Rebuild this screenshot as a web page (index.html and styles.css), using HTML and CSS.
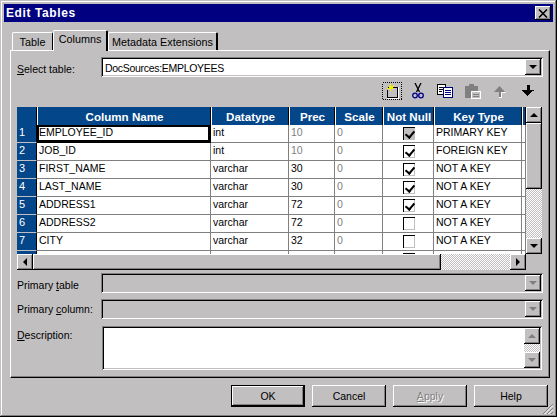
FILE: index.html
```html
<!DOCTYPE html>
<html lang="en">

<head>
    <meta charset="UTF-8">
    <title>Edit Tables</title>
    <link rel="stylesheet" href="styles.css">
</head>

<body>
    <div class="window">
        <header class="titlebar">
            <span class="title">Edit Tables</span>
            <button class="close raised">
                <svg width="10" height="9" viewBox="0 0 10 9"><path d="M1 0.5L9 8.5M9 0.5L1 8.5" stroke="#000" stroke-width="1.6" /></svg>
            </button>
        </header>

        <nav class="tabs">
            <div class="tab tab-table">Table</div>
            <div class="tab tab-active">Columns</div>
            <div class="tab tab-last">Metadata Extensions</div>
        </nav>

        <main class="pane">
            <div class="field">
                <label class="field-label label-low"><u>S</u>elect table:</label>
                <div class="combo sunken">
                    <span class="combo-text">DocSources:EMPLOYEES</span>
                    <span class="sb-btn raised"><i class="arrow arrow-down"></i></span>
                </div>
            </div>

            <div class="toolbar">
                <span class="tool tool-new">
                    <svg width="20" height="18" viewBox="0 0 20 18" shape-rendering="crispEdges">
                        <rect x="0.5" y="0.5" width="19" height="17" fill="none" stroke="#000" stroke-dasharray="1 1" />
                        <path d="M6 5.5H15.5V15.5H5.5V8" fill="none" stroke="#000" />
                        <path d="M16 5V16H5" fill="none" stroke="#fff" />
                        <path d="M8 2h1v2h2v-1h1v2h-1v1h1v1h-3v2h-1v-2h-3v-1h2v-2h1z" fill="#f4f000" />
                    </svg>
                </span>
                <span class="tool">
                    <svg width="12" height="16" viewBox="0 0 12 16">
                        <path d="M3 0L7.5 9M9 0L4.5 9" stroke="#000" stroke-width="1.3" fill="none" />
                        <circle cx="3" cy="12.5" r="2.3" stroke="#00008b" stroke-width="1.3" fill="none" />
                        <circle cx="9" cy="12.5" r="2.3" stroke="#00008b" stroke-width="1.3" fill="none" />
                    </svg>
                </span>
                <span class="tool">
                    <svg width="16" height="14" viewBox="0 0 16 14" shape-rendering="crispEdges">
                        <rect x="0.5" y="0.5" width="8" height="10" fill="#fff" stroke="#000" />
                        <path d="M2 3h5M2 5h5M2 7h3" stroke="#000" />
                        <rect x="6.5" y="3.5" width="9" height="10" fill="#fff" stroke="#00007b" />
                        <path d="M8 6h6M8 8h6M8 10h6" stroke="#00007b" />
                    </svg>
                </span>
                <span class="tool">
                    <svg width="17" height="15" viewBox="0 0 17 15" shape-rendering="crispEdges">
                        <path d="M1 2h4v-2h5v2h4v12h-13z" fill="#808080" />
                        <rect x="7.5" y="7.5" width="9" height="7" fill="#c2bfc1" stroke="#fff" />
                        <path d="M9 10h6M9 12h6" stroke="#808080" />
                    </svg>
                </span>
                <span class="tool">
                    <svg width="13" height="13" viewBox="0 0 13 13">
                        <path d="M6 12V7H1L6.5 1L12 7H8V12Z" fill="#808080" />
                        <path d="M8.5 12.5V7.5H12.5M6 12.5H8.5" stroke="#fff" fill="none" />
                    </svg>
                </span>
                <span class="tool">
                    <svg width="13" height="12" viewBox="0 0 13 12" shape-rendering="crispEdges">
                        <path d="M6 0h3v5h4l-1 1h-1v1h-1v1h-1v1h-1v1h-1v1h-1v-1h-1v-1h-1v-1h-1v-1h-1v-1h-1v-1h5z" fill="#000" />
                    </svg>
                </span>
            </div>

            <div class="grid-wrap">
                <div class="grid-clip">
                    <table class="grid">
                        <colgroup>
                            <col class="c-head">
                            <col class="c-name">
                            <col class="c-type">
                            <col class="c-prec">
                            <col class="c-scale">
                            <col class="c-null">
                            <col class="c-key">
                            <col class="c-end">
                        </colgroup>
                        <thead>
                            <tr>
                                <th></th>
                                <th>Column Name</th>
                                <th>Datatype</th>
                                <th>Prec</th>
                                <th>Scale</th>
                                <th>Not Null</th>
                                <th>Key Type</th>
                                <th></th>
                            </tr>
                        </thead>
                        <tbody>
                            <tr>
                                <td class="rowhead">1</td>
                                <td class="current">EMPLOYEE_ID</td>
                                <td>int</td>
                                <td class="dim">10</td>
                                <td class="dim">0</td>
                                <td class="check"><span class="box box-off on"></span></td>
                                <td>PRIMARY KEY</td>
                                <td></td>
                            </tr>
                            <tr>
                                <td class="rowhead">2</td>
                                <td>JOB_ID</td>
                                <td>int</td>
                                <td class="dim">10</td>
                                <td class="dim">0</td>
                                <td class="check"><span class="box on"></span></td>
                                <td>FOREIGN KEY</td>
                                <td></td>
                            </tr>
                            <tr>
                                <td class="rowhead">3</td>
                                <td>FIRST_NAME</td>
                                <td>varchar</td>
                                <td>30</td>
                                <td class="dim">0</td>
                                <td class="check"><span class="box on"></span></td>
                                <td>NOT A KEY</td>
                                <td></td>
                            </tr>
                            <tr>
                                <td class="rowhead">4</td>
                                <td>LAST_NAME</td>
                                <td>varchar</td>
                                <td>30</td>
                                <td class="dim">0</td>
                                <td class="check"><span class="box on"></span></td>
                                <td>NOT A KEY</td>
                                <td></td>
                            </tr>
                            <tr>
                                <td class="rowhead">5</td>
                                <td>ADDRESS1</td>
                                <td>varchar</td>
                                <td>72</td>
                                <td class="dim">0</td>
                                <td class="check"><span class="box on"></span></td>
                                <td>NOT A KEY</td>
                                <td></td>
                            </tr>
                            <tr>
                                <td class="rowhead">6</td>
                                <td>ADDRESS2</td>
                                <td>varchar</td>
                                <td>72</td>
                                <td class="dim">0</td>
                                <td class="check"><span class="box"></span></td>
                                <td>NOT A KEY</td>
                                <td></td>
                            </tr>
                            <tr>
                                <td class="rowhead">7</td>
                                <td>CITY</td>
                                <td>varchar</td>
                                <td>32</td>
                                <td class="dim">0</td>
                                <td class="check"><span class="box"></span></td>
                                <td>NOT A KEY</td>
                                <td></td>
                            </tr>
                            <tr>
                                <td class="rowhead">8</td>
                                <td>STATE</td>
                                <td>varchar</td>
                                <td>2</td>
                                <td class="dim">0</td>
                                <td class="check"><span class="box"></span></td>
                                <td>NOT A KEY</td>
                                <td></td>
                            </tr>
                        </tbody>
                    </table>
                </div>

                <div class="vscroll">
                    <span class="sb-btn raised"><i class="arrow arrow-up"></i></span>
                    <span class="vthumb raised"></span>
                    <span class="track"></span>
                    <span class="sb-btn raised"><i class="arrow arrow-down"></i></span>
                </div>

                <div class="hscroll">
                    <span class="sb-btn raised"><i class="arrow arrow-left"></i></span>
                    <span class="hthumb raised"></span>
                    <span class="track"></span>
                    <span class="sb-btn raised"><i class="arrow arrow-right"></i></span>
                </div>
            </div>

            <div class="field field-primary">
                <label class="field-label label-low">Primary <u>t</u>able</label>
                <div class="combo sunken combo-off">
                    <span class="combo-text"></span>
                    <span class="sb-btn raised"><i class="arrow arrow-down arrow-off"></i></span>
                </div>
            </div>

            <div class="field field-column">
                <label class="field-label">Primary <u>c</u>olumn:</label>
                <div class="combo sunken combo-off">
                    <span class="combo-text"></span>
                    <span class="sb-btn raised"><i class="arrow arrow-down arrow-off"></i></span>
                </div>
            </div>

            <div class="field field-desc">
                <label class="field-label"><u>D</u>escription:</label>
                <div class="memo sunken">
                    <div class="memo-scroll">
                        <span class="sb-btn raised"><i class="arrow arrow-up arrow-off"></i></span>
                        <span class="track"></span>
                        <span class="sb-btn raised"><i class="arrow arrow-down arrow-off"></i></span>
                    </div>
                </div>
            </div>
        </main>

        <footer class="footer">
            <button class="btn btn-default">OK</button>
            <button class="btn">Cancel</button>
            <button class="btn btn-off"><u>A</u>pply</button>
            <button class="btn">Help</button>
        </footer>

        <svg class="grip" width="10" height="10" viewBox="0 0 10 10">
            <path d="M0 10L10 0M4 10L10 4M8 10L10 8" stroke="#808080" fill="none" />
            <path d="M1.5 10L10 1.5M5.5 10L10 5.5" stroke="#fff" fill="none" />
        </svg>
    </div>
</body>

</html>
```

FILE: styles.css
```css
:root {
    --face: #c2bfc1;
    --blue: #04468a;
}

* {
    box-sizing: border-box;
}

body {
    margin: 0;
    padding: 0;
    font-family: "Liberation Sans", Arial, sans-serif;
    font-size: 10.5px;
    color: #000;
}

.raised {
    background-color: var(--face);
    box-shadow: inset -1px -1px 0 #000, inset 1px 1px 0 #fff, inset -2px -2px 0 #808080;
}

.sunken {
    box-shadow: inset 1px 1px 0 #808080, inset -1px -1px 0 #fff, inset 2px 2px 0 #000, inset -2px -2px 0 var(--face);
}

.window {
    position: relative;
    width: 557px;
    height: 417px;
    padding: 4px;
    background: var(--face);
    box-shadow: inset -1px -1px 0 #000, inset 1px 1px 0 var(--face), inset -2px -2px 0 #808080, inset 2px 2px 0 #fff;
}

.titlebar {
    display: flex;
    align-items: center;
    justify-content: space-between;
    height: 18px;
    padding: 0 2px 0 2px;
    background: #000080;
    color: #fff;
}

.title {
    font-size: 12px;
    font-weight: bold;
    letter-spacing: 0.6px;
}

.close {
    display: flex;
    align-items: center;
    justify-content: center;
    width: 16px;
    height: 14px;
    padding: 0;
    border: 0;
}

.tabs {
    display: flex;
    align-items: flex-end;
    height: 20px;
    margin: 8px 0 0 6px;
    padding-left: 2px;
}

.tab {
    height: 18px;
    padding-top: 3px;
    border-top: 1px solid #fff;
    border-left: 1px solid #fff;
    border-right: 1px solid #000;
    border-radius: 2px 2px 0 0;
    line-height: 13px;
    font-size: 10.8px;
    text-align: center;
    white-space: nowrap;
}

.tab-table {
    width: 41px;
}

.tab-active {
    position: relative;
    z-index: 1;
    width: 55px;
    height: 21px;
    margin-bottom: -1px;
    padding-top: 2px;
    background: var(--face);
    border-right: 2px solid #000;
}

.tab-last {
    width: 110px;
    border-right: 2px solid #000;
}

.pane {
    display: flex;
    flex-direction: column;
    width: 540px;
    height: 328px;
    margin-left: 6px;
    padding: 6px 6px 0 6px;
    border-top: 1px solid #fff;
    border-left: 1px solid #fff;
    border-right: 1px solid #000;
    border-bottom: 1px solid #000;
    box-shadow: inset -1px -1px 0 #808080;
}

.field {
    display: flex;
    height: 20px;
}

.field-label {
    width: 84px;
    padding-top: 4px;
    flex-shrink: 0;
}

.label-low {
    padding-top: 6px;
}

.field-primary {
    margin-top: 3px;
}

.field-column {
    margin-top: 6px;
}

.field-desc {
    height: 44px;
    margin-top: 7px;
}

.field-desc .field-label {
    padding-top: 3px;
}

.combo {
    display: flex;
    align-items: center;
    flex: 1;
    padding: 2px;
    background: #fff;
}

.combo-off {
    background: var(--face);
}

.combo-text {
    flex: 1;
    padding: 1px 0 0 2px;
    letter-spacing: -0.3px;
}

.combo .sb-btn {
    width: 16px;
    height: 16px;
}

.memo {
    display: flex;
    justify-content: flex-end;
    flex: 1;
    margin: 0 1px;
    padding: 2px;
    background: #fff;
}

.memo-scroll {
    display: flex;
    flex-direction: column;
    width: 16px;
}

.toolbar {
    display: flex;
    align-items: center;
    justify-content: flex-end;
    height: 30px;
    padding: 0 2px 2px 0;
}

.tool {
    display: flex;
    align-items: center;
    justify-content: center;
    width: 27.4px;
}

.tool-new {
    margin-right: -2px;
}

.grid-wrap {
    display: grid;
    grid-template-columns: 509px 16px;
    grid-template-rows: 147px 16px;
    height: 163px;
}

.grid-clip {
    overflow: hidden;
    background: #fff;
}

.grid {
    width: 509px;
    table-layout: fixed;
    border-collapse: separate;
    border-spacing: 0;
    background: #fff;
}

.c-head { width: 20px; }
.c-name { width: 174px; }
.c-type { width: 78px; }
.c-prec { width: 46px; }
.c-scale { width: 48px; }
.c-null { width: 51px; }
.c-key { width: 88px; }
.c-end { width: 4px; }

.grid th {
    height: 18px;
    padding: 0 0 0 2px;
    background: var(--blue);
    color: #fff;
    font-size: 11.6px;
    font-weight: bold;
    text-align: center;
    white-space: nowrap;
    border-right: 1px solid #000;
    box-shadow: inset 1px 0 0 #fff;
}

.grid th:first-child {
    box-shadow: none;
}

.grid td {
    height: 18px;
    padding: 0 0 3px 2px;
    border-right: 1px solid #808080;
    border-bottom: 1px solid #808080;
    white-space: nowrap;
    overflow: hidden;
}

.grid td.rowhead {
    padding-left: 2px;
    font-size: 11px;
    background: var(--blue);
    color: #fff;
    border-right: 1px solid #000;
    border-bottom: 1px solid var(--face);
}

.grid td.current {
    box-shadow: inset 0 0 0 2px #000;
    border-bottom-color: #000;
    border-right-color: #000;
}

.grid td.dim {
    color: #808080;
}

.grid td.check {
    padding: 2px 0 0 1px;
    text-align: center;
}

.box {
    display: inline-block;
    position: relative;
    width: 12px;
    height: 13px;
    background: #fff;
    box-shadow: inset 1px 1px 0 #000, inset -1px -1px 0 var(--face);
}

.box-off {
    background: var(--face);
}

.box.on::after {
    content: "";
    position: absolute;
    left: 4px;
    top: 2px;
    width: 4px;
    height: 7px;
    border-right: 2px solid #000;
    border-bottom: 2px solid #000;
    transform: rotate(40deg);
}

.sb-btn {
    display: flex;
    align-items: center;
    justify-content: center;
    width: 16px;
    height: 16px;
    flex-shrink: 0;
}

.track {
    flex: 1;
    background: repeating-conic-gradient(#fff 0 25%, var(--face) 0 50%) 0 0 / 2px 2px;
}

.vscroll {
    display: flex;
    flex-direction: column;
}

.vthumb {
    height: 66px;
}

.hscroll {
    display: flex;
}

.hthumb {
    width: 408px;
}

.arrow {
    display: block;
    width: 0;
    height: 0;
    border-style: solid;
    border-color: transparent;
}

.arrow-down {
    border-width: 4px 4px 0 4px;
    border-top-color: #000;
}

.arrow-up {
    border-width: 0 4px 4px 4px;
    border-bottom-color: #000;
}

.arrow-left {
    border-width: 4px 4px 4px 0;
    border-right-color: #000;
}

.arrow-right {
    border-width: 4px 0 4px 4px;
    border-left-color: #000;
}

.arrow-off.arrow-down {
    border-top-color: #808080;
}

.arrow-off.arrow-up {
    border-bottom-color: #808080;
}

.footer {
    display: flex;
    justify-content: flex-end;
    gap: 7px;
    padding: 7px 5px 0 0;
}

.btn {
    width: 74px;
    height: 22px;
    padding: 0;
    border: 0;
    font-family: inherit;
    font-size: 10.5px;
    color: #000;
    background: var(--face);
    box-shadow: inset -1px -1px 0 #000, inset 1px 1px 0 #fff, inset -2px -2px 0 #808080;
}

.btn-default {
    box-shadow: inset 0 0 0 1px #000, inset -2px -2px 0 #000, inset 2px 2px 0 #fff, inset -3px -3px 0 #808080;
}

.btn-off {
    color: #808080;
    text-shadow: 1px 1px 0 #fff;
}

.grip {
    position: absolute;
    right: 4px;
    bottom: 3px;
}
```
